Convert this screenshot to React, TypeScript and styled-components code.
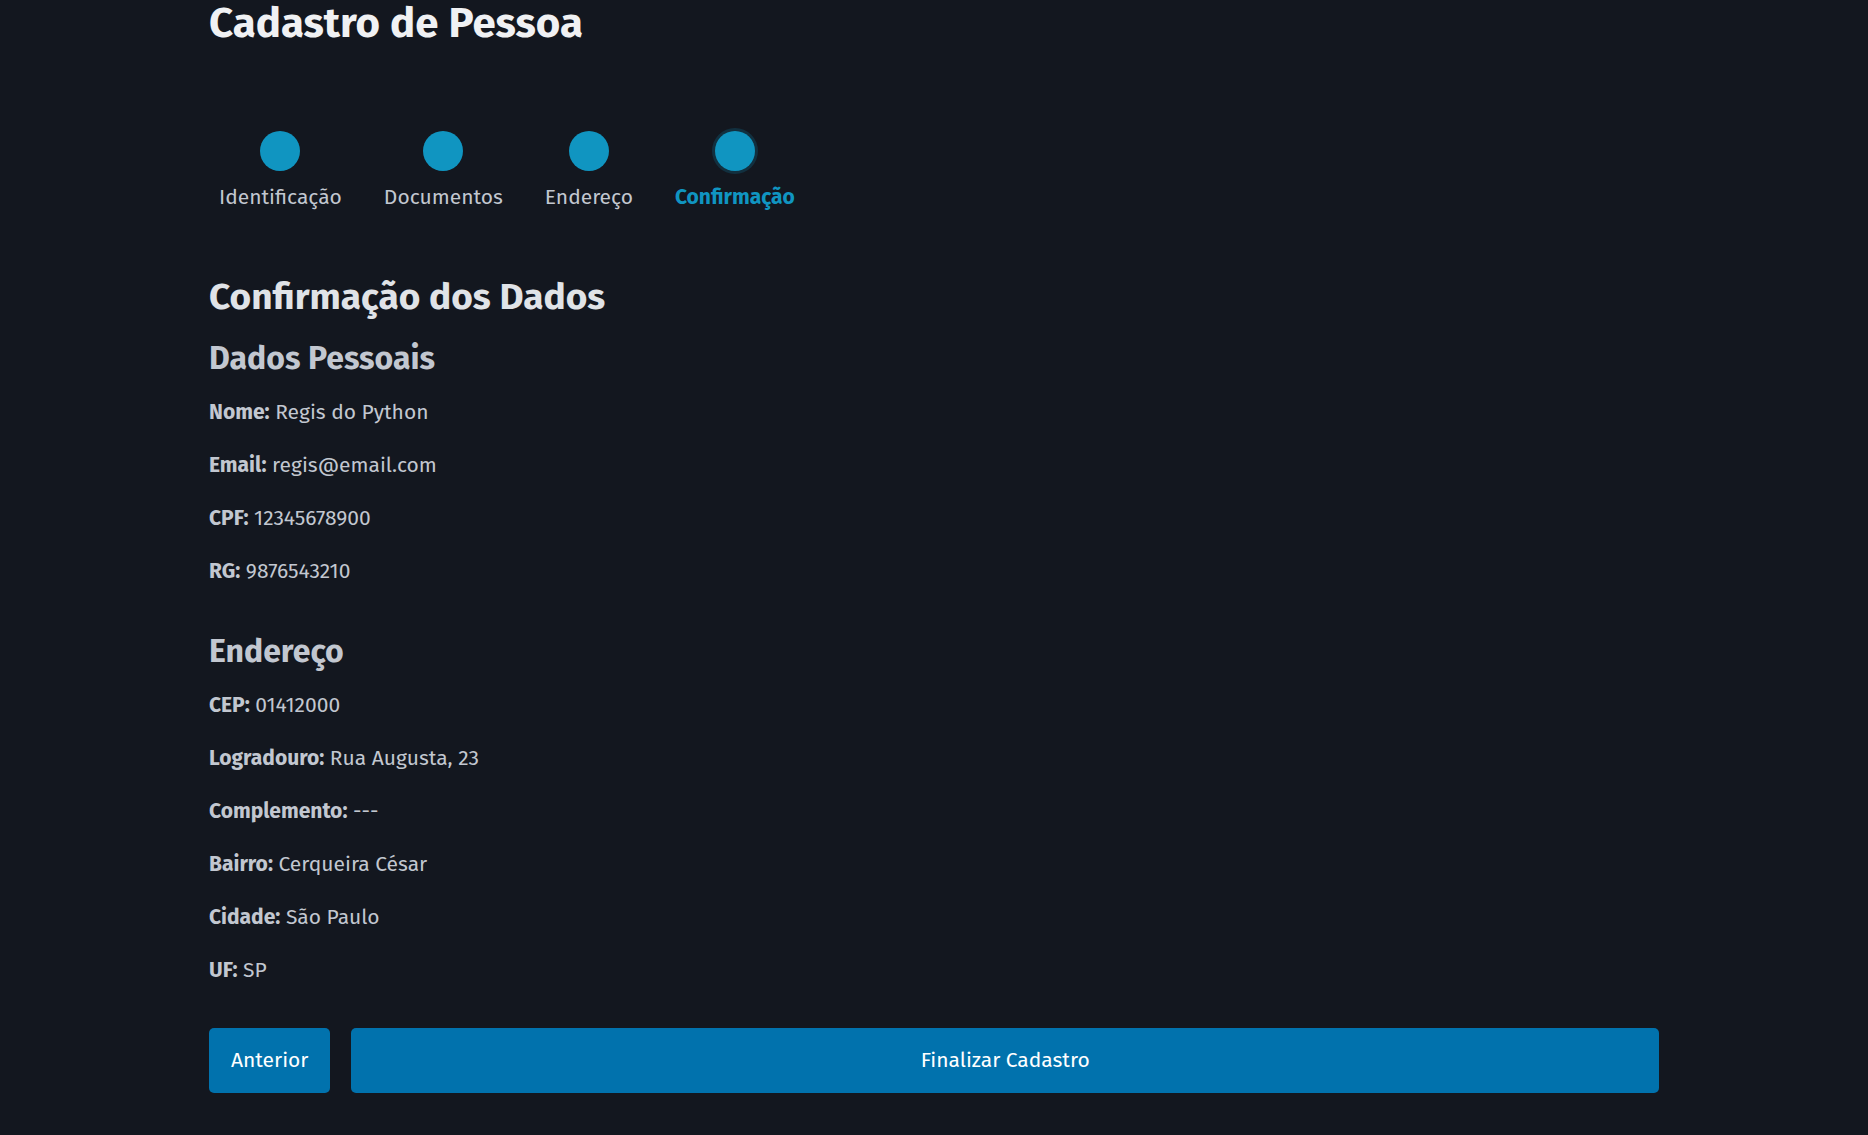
import React from "react";
import styled, { createGlobalStyle } from "styled-components";

const GlobalStyle = createGlobalStyle`
  *, *::before, *::after { box-sizing: border-box; }
  body {
    margin: 0;
    background: #13171f;
    color: #c2c7d0;
    font-family: "Fira Sans", "Noto Sans", sans-serif;
    font-size: 21px;
    line-height: 32px;
  }
`;

const Container = styled.main`
  width: 100%;
  max-width: 1450px;
  margin: 0 auto;
  padding-bottom: 42px;
`;

const Title = styled.h1`
  margin: 0;
  color: #f0f1f3;
  font-size: 42px;
  line-height: 46px;
  font-weight: 700;
`;

const Steps = styled.ol`
  display: flex;
  gap: 42px;
  list-style: none;
  margin: 85px 0 0;
  padding: 0 10px;
`;

const Step = styled.li<{ $active?: boolean }>`
  display: flex;
  flex-direction: column;
  align-items: center;
  gap: 10px;
  color: ${(p) => (p.$active ? "#1095c1" : "inherit")};
  font-weight: ${(p) => (p.$active ? 700 : 400)};
`;

const Dot = styled.span<{ $active?: boolean }>`
  width: 40px;
  height: 40px;
  border-radius: 50%;
  background: #1095c1;
  box-shadow: ${(p) => (p.$active ? "0 0 0 3px rgba(16, 149, 193, 0.2)" : "none")};
`;

const Heading = styled.h2`
  margin: 63px 0 21px;
  color: #e0e3e7;
  font-size: 37px;
  line-height: 42px;
  font-weight: 700;
`;

const Sections = styled.div`
  display: flex;
  flex-direction: column;
  gap: 45px;
`;

const Subheading = styled.h3`
  margin: 0 0 19px;
  font-size: 32px;
  line-height: 38px;
  font-weight: 700;
`;

const Fields = styled.div`
  display: flex;
  flex-direction: column;
  gap: 21px;
`;

const Field = styled.p`
  margin: 0;
`;

const Actions = styled.div`
  display: flex;
  gap: 21px;
  margin-top: 42px;
`;

const Button = styled.button<{ $grow?: boolean }>`
  flex: ${(p) => (p.$grow ? "1" : "none")};
  padding: 16px 22px;
  border: 0;
  border-radius: 5px;
  background: #0172ad;
  color: #fff;
  font: inherit;
  line-height: 33px;
  cursor: pointer;
`;

const steps = ["Identificação", "Documentos", "Endereço", "Confirmação"];
const current = 3;

const sections = [
  {
    title: "Dados Pessoais",
    fields: [
      ["Nome", "Regis do Python"],
      ["Email", "regis@email.com"],
      ["CPF", "12345678900"],
      ["RG", "9876543210"],
    ],
  },
  {
    title: "Endereço",
    fields: [
      ["CEP", "01412000"],
      ["Logradouro", "Rua Augusta, 23"],
      ["Complemento", "---"],
      ["Bairro", "Cerqueira César"],
      ["Cidade", "São Paulo"],
      ["UF", "SP"],
    ],
  },
];

export default function App() {
  return (
    <>
      <GlobalStyle />
      <Container>
        <Title>Cadastro de Pessoa</Title>
        <Steps>
          {steps.map((label, i) => (
            <Step key={label} $active={i === current} aria-current={i === current ? "step" : undefined}>
              <Dot $active={i === current} />
              {label}
            </Step>
          ))}
        </Steps>
        <Heading>Confirmação dos Dados</Heading>
        <Sections>
          {sections.map((section) => (
            <section key={section.title}>
              <Subheading>{section.title}</Subheading>
              <Fields>
                {section.fields.map(([label, value]) => (
                  <Field key={label}>
                    <strong>{label}:</strong> {value}
                  </Field>
                ))}
              </Fields>
            </section>
          ))}
        </Sections>
        <Actions>
          <Button type="button">Anterior</Button>
          <Button type="submit" $grow>Finalizar Cadastro</Button>
        </Actions>
      </Container>
    </>
  );
}
